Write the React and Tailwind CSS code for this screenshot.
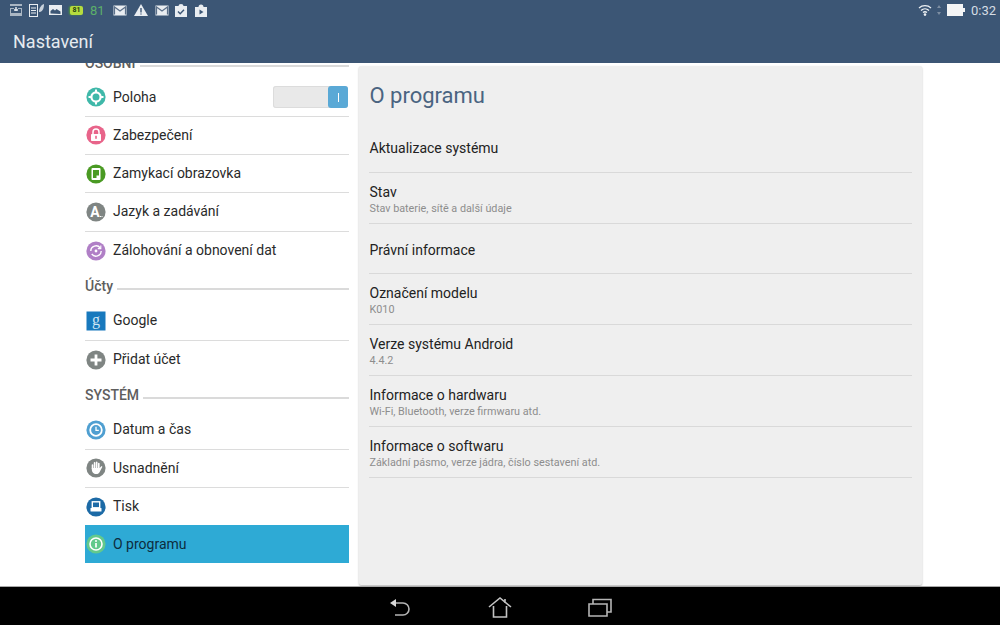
import React from 'react';

const Circle = ({ color, children }) => (
    <svg width="20" height="20" viewBox="0 0 20 20" className="shrink-0">
        <circle cx="10" cy="10" r="9.6" fill={color} />
        {children}
    </svg>
);

const icons = {
    poloha: (
        <Circle color="#3fb8a9">
            <circle cx="10" cy="10" r="4.6" fill="none" stroke="#fff" strokeWidth="2.2" />
            <path d="M10 2.5v3M10 14.5v3M2.5 10h3M14.5 10h3" stroke="#fff" strokeWidth="2" />
        </Circle>
    ),
    zabezpeceni: (
        <Circle color="#e8648a">
            <path d="M7 9V7a3 3 0 0 1 6 0V9" fill="none" stroke="#fff" strokeWidth="1.5" />
            <rect x="5" y="9" width="10" height="7" rx="0.8" fill="#fff" />
            <rect x="9.2" y="10.8" width="1.6" height="3" fill="#e8648a" />
        </Circle>
    ),
    zamykaci: (
        <Circle color="#4a9a23">
            <rect x="5.5" y="4" width="9" height="12" rx="1" fill="#fff" />
            <rect x="7" y="6" width="6" height="8" fill="#4a9a23" />
            <rect x="10.5" y="11.5" width="3.5" height="3" fill="#fff" />
        </Circle>
    ),
    jazyk: (
        <Circle color="#7f8583">
            <text x="9" y="14.5" fontSize="14" fontWeight="700" fill="#fff" textAnchor="middle" fontFamily="Roboto, sans-serif">A</text>
            <path d="M14 14.5h3" stroke="#fff" strokeWidth="1" strokeDasharray="1 0.5" />
        </Circle>
    ),
    zalohovani: (
        <Circle color="#b07fc6">
            <path d="M4.8 10a5.2 5.2 0 0 1 9.4-3M15.2 10a5.2 5.2 0 0 1-9.4 3" fill="none" stroke="#fff" strokeWidth="1.4" />
            <path d="M14.8 4.6v3h-3" fill="none" stroke="#fff" strokeWidth="1.1" />
            <circle cx="10" cy="10" r="1.4" fill="#fff" />
        </Circle>
    ),
    google: (
        <svg width="20" height="20" viewBox="0 0 20 20" className="shrink-0">
            <rect width="19" height="19" x="0.5" y="0.5" fill="#1879bd" />
            <text x="10" y="13.5" fontSize="16" fill="#cfe6f4" textAnchor="middle" fontFamily="Liberation Serif, serif">g</text>
        </svg>
    ),
    pridat: (
        <Circle color="#7f8583">
            <path d="M10 4.5v11M4.5 10h11" stroke="#fff" strokeWidth="2.8" />
        </Circle>
    ),
    datum: (
        <Circle color="#4f9fd1">
            <circle cx="10" cy="10" r="5.8" fill="none" stroke="#fff" strokeWidth="1.8" />
            <path d="M10 6.8V10.4h2.8" fill="none" stroke="#fff" strokeWidth="1.3" />
        </Circle>
    ),
    usnadneni: (
        <Circle color="#7f8583">
            <path d="M6.5 10.5V7M8.6 10V4.8M10.7 10V4.4M12.8 10.5V5.6" stroke="#fff" strokeWidth="1.6" strokeLinecap="round" />
            <path d="M5.8 10h7.9l1.8-2 .9.7-2.6 5c-.7 1.5-1.8 2.3-3.5 2.3-2.8 0-4.5-2.4-4.5-4.6z" fill="#fff" />
        </Circle>
    ),
    tisk: (
        <Circle color="#1c6aa6">
            <rect x="6.3" y="4.8" width="7.4" height="6" fill="none" stroke="#fff" strokeWidth="1.4" />
            <rect x="4.5" y="11" width="11" height="3.6" rx="0.6" fill="#fff" />
        </Circle>
    ),
    oprogramu: (
        <Circle color="#63c98c">
            <circle cx="10" cy="10" r="6" fill="none" stroke="#fff" strokeWidth="1.6" />
            <path d="M10 9v4.4" stroke="#fff" strokeWidth="1.7" />
            <circle cx="10" cy="6.9" r="1" fill="#fff" />
        </Circle>
    ),
};

const Row = ({ icon, label, last, active, children }) => (
    <div className={`flex items-center pl-[1px] ${active ? '-mt-[1px] h-[38px] bg-[#2eaad5] text-[#0d2c3d]' : 'h-[38.25px] text-[#2a2a2a]'} ${last ? '' : 'border-b border-[#dcdcdc]'}`}>
        {icons[icon]}
        <span className="ml-[7px] text-[14px]">{label}</span>
        {children}
    </div>
);

const Section = ({ label }) => (
    <div className="flex h-[32.5px] items-end pb-[7px]">
        <span className="text-[14px] font-medium leading-[18px] text-[#5e5e5e]">{label}</span>
        <div className="mb-[5px] ml-[4px] h-[2px] flex-1 bg-[#dadada]" />
    </div>
);

const Setting = ({ title, sub }) => (
    <div className="flex h-[50.8px] flex-col justify-center border-b border-[#d9d9d9] pt-[3px]">
        <div className="pl-[0.5px] text-[14px] leading-[18px] text-[#222]">{title}</div>
        {sub && <div className="mt-[1px] pl-[0.5px] text-[10.8px] leading-[14px] text-[#8d8d8d]">{sub}</div>}
    </div>
);

const Mail = () => (
    <svg width="14" height="11" viewBox="0 0 14 11">
        <rect x="0.5" y="0.5" width="13" height="10" fill="#e9edf1" />
        <path d="M1.5 9.5V2l5.5 4 5.5-4v7.5" fill="none" stroke="#5b7089" strokeWidth="1.2" />
    </svg>
);

const StatusLeft = () => (
    <div className="flex items-center">
        <svg className="ml-[10px]" width="12" height="12" viewBox="0 0 12 12">
            <path d="M0 0h12v2H0zM0 4h4v1H1v4h10V5H8V4h4v8H0z" fill="#aab6c3" />
            <path d="M6 3v4M4 6h4" stroke="#e9edf1" strokeWidth="1.4" />
        </svg>
        <svg className="ml-[7px]" width="15" height="14" viewBox="0 0 15 14">
            <rect x="0.5" y="1.5" width="8" height="12" fill="none" stroke="#e9edf1" />
            <path d="M2 5h5M2 7.5h5M2 10h5" stroke="#e9edf1" />
            <path d="M10 9c0-4 2-7 5-8 0 4-1 7-4 8z" fill="#c9d2dc" />
        </svg>
        <svg className="ml-[5px]" width="13" height="10" viewBox="0 0 13 10">
            <rect width="13" height="10" fill="#e9edf1" />
            <path d="M1.5 8.5V6l2.5-2 2 1.5 1.5-1.500 4 2.500v2.500z" fill="#3c5675" />
        </svg>
        <div className="ml-[8px] flex h-[9px] w-[13px] items-center justify-center rounded-[2px] bg-[#b6dc3e] text-[7px] font-bold text-[#23400f] shadow-[-1px_0_2px_#4f9a3a]">81</div>
        <span className="ml-[7px] text-[13px] leading-none text-[#5cb06a]">81</span>
        <div className="ml-[8px] flex"><Mail /></div>
        <svg className="ml-[7px]" width="14" height="12" viewBox="0 0 14 12">
            <path d="M7 0l7 12H0z" fill="#e9edf1" />
            <path d="M7 4v4.4M7 9.4v1.2" stroke="#3c5675" strokeWidth="1.4" />
        </svg>
        <div className="ml-[7px] flex"><Mail /></div>
        <svg className="ml-[6px]" width="12" height="13" viewBox="0 0 12 13">
            <path d="M0 2h3.500a2.500 2 0 0 1 5 0H12v11H0z" fill="#e9edf1" />
            <path d="M3 7.500l2.200 2.200L9 5.800" fill="none" stroke="#3c5675" strokeWidth="1.4" />
        </svg>
        <svg className="ml-[8px]" width="12" height="13" viewBox="0 0 12 13">
            <path d="M0 3h3.500a2.500 2.600 0 0 1 5 0H12v10H0z" fill="#e9edf1" />
            <path d="M4.500 5.500v5l4-2.500z" fill="#3c5675" />
        </svg>
    </div>
);

const StatusRight = () => (
    <div className="flex items-center">
        <svg width="14" height="12" viewBox="0 0 14 12">
            <path d="M1 4a9 9 0 0 1 12 0M3 6.400a6 6 0 0 1 8 0M5 8.600a3 3 0 0 1 4 0" fill="none" stroke="#eef1f4" strokeWidth="1.3" />
            <circle cx="7" cy="10.6" r="1.3" fill="#eef1f4" />
        </svg>
        <svg className="ml-[5px]" width="4" height="10" viewBox="0 0 4 10">
            <path d="M2 0l2 3H0zM2 10l2-3H0z" fill="#7d8ea2" />
        </svg>
        <svg className="ml-[6px]" width="18" height="12" viewBox="0 0 18 12">
            <rect width="16" height="12" fill="#f4f5f6" />
            <rect x="16" y="4" width="2" height="4" fill="#f4f5f6" />
        </svg>
        <span className="ml-[6px] mr-[4px] text-[13px] leading-none text-[#d6dde4]">0:32</span>
    </div>
);

export default function App() {
    return (
        <div className="flex h-[625px] w-[1000px] flex-col overflow-hidden bg-white font-['Roboto',sans-serif]">
            <header className="h-[63px] shrink-0 bg-[#3c5675]">
                <div className="flex h-[20px] items-center justify-between">
                    <StatusLeft />
                    <StatusRight />
                </div>
                <div className="pl-[13px] pt-[10px] text-[18px] leading-[24px] text-[#e6ebf0]">Nastavení</div>
            </header>

            <main className="flex min-h-0 flex-1 overflow-hidden">
                <nav className="ml-[85px] w-[264px] shrink-0 overflow-hidden">
                    <div className="-mt-[17px]">
                        <Section label="OSOBNÍ" />
                        <Row icon="poloha" label="Poloha">
                            <div className="ml-auto mr-[1px] flex h-[22px] w-[75px] justify-end rounded-[3px] bg-[#e9e9e9] shadow-[inset_0_0_0_1px_#dcdcdc]">
                                <div className="flex w-[20px] items-center justify-center rounded-[3px] bg-[#5aa9d6]">
                                    <div className="h-[9px] w-px bg-white" />
                                </div>
                            </div>
                        </Row>
                        <Row icon="zabezpeceni" label="Zabezpečení" />
                        <Row icon="zamykaci" label="Zamykací obrazovka" />
                        <Row icon="jazyk" label="Jazyk a zadávání" />
                        <Row icon="zalohovani" label="Zálohování a obnovení dat" last />
                        <Section label="Účty" />
                        <Row icon="google" label="Google" />
                        <Row icon="pridat" label="Přidat účet" last />
                        <Section label="SYSTÉM" />
                        <Row icon="datum" label="Datum a čas" />
                        <Row icon="usnadneni" label="Usnadnění" />
                        <Row icon="tisk" label="Tisk" last />
                        <Row icon="oprogramu" label="O programu" active last />
                    </div>
                </nav>

                <section className="mb-[1px] ml-[10px] mt-[3px] flex w-[563px] flex-col rounded-[2px] bg-[#efefef] px-[10px] shadow-[0_1px_2px_#b5b5b5]">
                    <h1 className="pl-[0.5px] pt-[15px] text-[22px] leading-[30px] text-[#4a6481]">O programu</h1>
                    <div className="mt-[11px]">
                        <Setting title="Aktualizace systému" />
                        <Setting title="Stav" sub="Stav baterie, sítě a další údaje" />
                        <Setting title="Právní informace" />
                        <Setting title="Označení modelu" sub="K010" />
                        <Setting title="Verze systému Android" sub="4.4.2" />
                        <Setting title="Informace o hardwaru" sub="Wi-Fi, Bluetooth, verze firmwaru atd." />
                        <Setting title="Informace o softwaru" sub="Základní pásmo, verze jádra, číslo sestavení atd." />
                    </div>
                </section>
            </main>

            <footer className="flex h-[39px] shrink-0 items-center justify-center gap-[76px] border-t border-[#a8a8a8] bg-black pt-[2px]">
                <svg width="24" height="20" viewBox="0 0 24 20">
                    <path d="M4 6h11a6 6 0 0 1 0 12H7" fill="none" stroke="#b5b5b5" strokeWidth="1.6" />
                    <path d="M2 6l6-4v8z" fill="#d8d8d8" />
                </svg>
                <svg width="24" height="22" viewBox="0 0 24 22">
                    <path d="M1 11l11-9 11 9M5.5 10v11h13V10M17 3v4" fill="none" stroke="#c4c4c4" strokeWidth="1.6" />
                </svg>
                <svg width="24" height="19" viewBox="0 0 24 19">
                    <path d="M1 6h18v12H1zM5 6V1.500h18V14h-4" fill="none" stroke="#b5b5b5" strokeWidth="1.6" />
                </svg>
            </footer>
        </div>
    );
}
